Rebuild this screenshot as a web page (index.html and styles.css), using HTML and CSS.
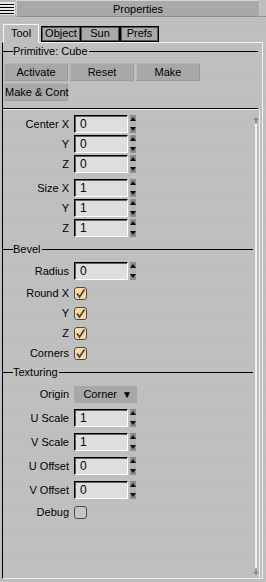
FILE: index.html
```html
<!DOCTYPE html>
<html lang="en">
<head>
  <meta charset="UTF-8">
  <title>Properties</title>
  <link rel="stylesheet" href="styles.css">
</head>
<body>

  <!-- title bar -->
  <div class="titlebar">
    <span class="menu-icon">
      <svg width="15" height="16" viewBox="0 0 15 16">
        <rect x="0" y="2" width="15" height="13" fill="#e8e8e8"/>
        <path d="M0 4.5H14M0 7.5H14M0 10.5H14M0 13.5H14" stroke="#000" stroke-width="1"/>
      </svg>
    </span>
    <div class="title">Properties</div>
    <span class="title-end"></span>
  </div>

  <!-- tabs -->
  <div class="tabs">
    <div class="tab active">Tool</div>
    <div class="tab object">Object</div>
    <div class="tab sun">Sun</div>
    <div class="tab prefs">Prefs</div>
  </div>

  <div class="panel">
    <div class="group-title top"><span>Primitive: Cube</span></div>

    <div class="buttons">
      <div class="btn">Activate</div>
      <div class="btn">Reset</div>
      <div class="btn">Make</div>
      <div class="btn">Make &amp; Cont</div>
    </div>

    <div class="separator"></div>

    <div class="scroll">
      <div class="fields">
        <div class="row first"><span class="label">Center X</span><span class="num">0</span><span class="spin"></span></div>
        <div class="row"><span class="label">Y</span><span class="num">0</span><span class="spin"></span></div>
        <div class="row"><span class="label">Z</span><span class="num">0</span><span class="spin"></span></div>
        <div class="row wide"><span class="label">Size X</span><span class="num">1</span><span class="spin"></span></div>
        <div class="row"><span class="label">Y</span><span class="num">1</span><span class="spin"></span></div>
        <div class="row"><span class="label">Z</span><span class="num">1</span><span class="spin"></span></div>

        <div class="group-title bevel"><span>Bevel</span></div>
        <div class="row after-title"><span class="label">Radius</span><span class="num">0</span><span class="spin"></span></div>
        <div class="row check-first"><span class="label">Round X</span><span class="check on"></span></div>
        <div class="row"><span class="label">Y</span><span class="check on"></span></div>
        <div class="row"><span class="label">Z</span><span class="check on"></span></div>
        <div class="row"><span class="label">Corners</span><span class="check on"></span></div>

        <div class="group-title texturing"><span>Texturing</span></div>
        <div class="row after-title"><span class="label">Origin</span><span class="dropdown">Corner <b>&#9660;</b></span></div>
        <div class="row wide"><span class="label">U Scale</span><span class="num">1</span><span class="spin"></span></div>
        <div class="row wide"><span class="label">V Scale</span><span class="num">1</span><span class="spin"></span></div>
        <div class="row wide"><span class="label">U Offset</span><span class="num">0</span><span class="spin"></span></div>
        <div class="row wide"><span class="label">V Offset</span><span class="num">0</span><span class="spin"></span></div>
        <div class="row check-first"><span class="label">Debug</span><span class="check"></span></div>
      </div>

      <!-- scrollbar -->
      <div class="scrollbar">
        <svg width="6" height="6" viewBox="0 0 6 6"><path d="M3 0L6 3H4V6H2V3H0Z" fill="#8a8a8a"/></svg>
        <div class="track"></div>
        <svg width="6" height="6" viewBox="0 0 6 6"><path d="M3 6L6 3H4V0H2V3H0Z" fill="#8a8a8a"/></svg>
      </div>
    </div>
  </div>

</body>
</html>
```

FILE: styles.css
```css
* { margin: 0; padding: 0; box-sizing: border-box; }

body {
  width: 266px;
  height: 582px;
  overflow: hidden;
  font-family: 'Liberation Sans', Arial, sans-serif;
  font-size: 11px;
  color: #000;
  background: #bebebe;
  background-image: repeating-linear-gradient(0deg, rgba(255, 255, 255, 0.05) 0 1px, transparent 1px 3px);
}

/* title bar */
.titlebar {
  height: 17px;
  display: flex;
}

.menu-icon {
  width: 16px;
  height: 17px;
  background: #b8b8b8;
}

.menu-icon svg { display: block; }

.title {
  flex: 1;
  text-align: center;
  line-height: 16px;
  background: #a9a9a9;
  border-top: 1px solid #d4d4d4;
  border-bottom: 1px solid #8e8e8e;
  border-left: 1px solid #d0d0d0;
}

.title-end {
  width: 7px;
  margin-top: 2px;
  background: #bdbdbd;
  border-left: 1px solid #c8c8c8;
  border-bottom: 1px solid #909090;
}

/* tabs */
.tabs {
  height: 25px;
  padding-left: 3px;
  display: flex;
  align-items: flex-end;
}

.tab {
  height: 16px;
  line-height: 13px;
  text-align: center;
  background: #a9a9a9;
  border: 1px solid #000;
  box-shadow: inset 1px 1px 0 #555, inset -1px -1px 0 #555;
}

.tab.active {
  position: relative;
  z-index: 1;
  width: 36px;
  height: 19px;
  line-height: 17px;
  margin-bottom: -1px;
  background: #bebebe;
  border: 1px solid #f4f4f4;
  border-bottom: none;
  box-shadow: none;
}

.tab.object { width: 40px; margin-left: 2px; }
.tab.sun { width: 40px; margin-left: -1px; }
.tab.prefs { width: 39px; margin-left: 0; }

/* panel */
.panel {
  margin-left: 2px;
  width: 261px;
  height: 537px;
  border-left: 1px solid #000;
  border-top: 1px solid #f4f4f4;
  border-right: 1px solid #f0f0f0;
  border-bottom: 1px solid #f0f0f0;
  display: flex;
  flex-direction: column;
}

.group-title {
  display: flex;
  align-items: center;
  height: 12px;
  line-height: 12px;
}

.group-title::before {
  content: "";
  width: 10px;
  border-top: 1px solid #000;
}

.group-title::after {
  content: "";
  flex: 1;
  border-top: 1px solid #000;
}

.group-title span { padding: 0 1px 0 0; }

.group-title.top {
  height: 16px;
  margin-right: 4px;
}

.group-title.bevel { margin-top: 6px; }
.group-title.texturing { margin-top: 4px; }

.buttons {
  margin: 4px 0 0 1px;
  display: grid;
  grid-template-columns: 64px 64px 64px;
  gap: 2px;
}

.btn {
  height: 18px;
  line-height: 16px;
  text-align: center;
  white-space: nowrap;
  background: #a8a8a8;
  border: 1px solid #b6b6b6;
  border-right-color: #9a9a9a;
  border-bottom-color: #9a9a9a;
}

.separator {
  margin: 7px 4px 0 0;
  height: 2px;
  border-top: 1px solid #000;
  border-bottom: 1px solid #f4f4f4;
}

/* scrolling field list */
.scroll {
  flex: 1;
  display: flex;
}

.fields {
  width: 250px;
  padding-top: 5px;
}

.row {
  display: flex;
  align-items: center;
  height: 18px;
  margin-top: 2px;
}

.row.first { margin-top: 0; }
.row.wide { margin-top: 6px; }
.row.after-title { margin-top: 7px; }
.row.check-first { margin-top: 4px; }

.label {
  width: 66px;
  margin-right: 5px;
  text-align: right;
}

.num {
  width: 54px;
  height: 18px;
  line-height: 16px;
  padding-left: 5px;
  font-size: 12px;
  background: #dedede;
  border: 1px solid #fff;
  border-top-color: #000;
  border-left-color: #000;
  box-shadow: inset 1px 1px 0 #606060;
}

.spin {
  width: 6px;
  height: 18px;
  margin-left: 2px;
  background: linear-gradient(#8c8c8c 0 6px, #b4b4b4 6px 12px, #8c8c8c 12px);
  position: relative;
}

.spin::before,
.spin::after {
  content: "";
  position: absolute;
  left: 0;
  border-left: 3px solid transparent;
  border-right: 3px solid transparent;
}

.spin::before { top: 2px; border-bottom: 4px solid #111; }
.spin::after { bottom: 2px; border-top: 4px solid #111; }

.check {
  width: 13px;
  height: 13px;
  border: 1px solid #4a4a4a;
  border-radius: 3px;
  background: #c6c6c6;
}

.check.on {
  background: #fcd9a4 url("data:image/svg+xml,%3Csvg xmlns='http://www.w3.org/2000/svg' width='11' height='11'%3E%3Cpath d='M2 5.5L4.5 9L9.5 1.5' fill='none' stroke='%23444' stroke-width='1.8'/%3E%3C/svg%3E") no-repeat center;
}

.dropdown {
  width: 63px;
  height: 17px;
  line-height: 17px;
  padding-right: 5px;
  text-align: right;
  background: #a8a8a8;
}

.dropdown b { font-size: 10px; font-weight: normal; margin-left: 2px; }

/* scrollbar */
.scrollbar {
  width: 7px;
  padding: 7px 0 3px 0;
  border-right: 1px solid #f0f0f0;
  display: flex;
  flex-direction: column;
  align-items: center;
}

.scrollbar svg { display: block; }

.scrollbar .track {
  flex: 1;
  width: 2px;
  margin: 1px 0;
  background: #f0f0f0;
}
```
